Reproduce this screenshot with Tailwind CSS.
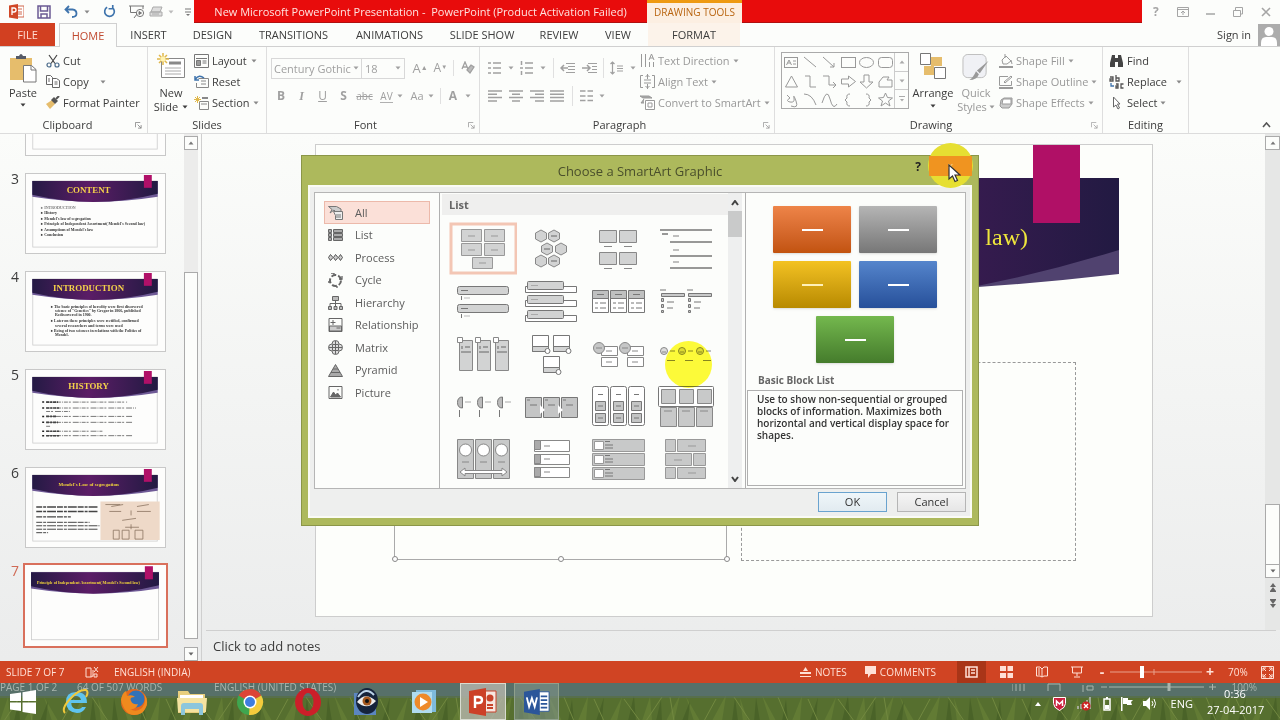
<!DOCTYPE html>
<html lang="en">
<head>
<meta charset="utf-8">
<title>New Microsoft PowerPoint Presentation - PowerPoint</title>
<meta name="viewport" content="width=device-width, initial-scale=1">
<script src="https://cdn.jsdelivr.net/npm/@tailwindcss/browser@4"></script>
</head>
<body class="bg-[#fcfdfb] font-['Open_Sans','Noto_Sans',sans-serif] text-[11px] leading-4 text-[#3c3c3c]">

<!-- shared drawings -->
<svg class="absolute size-0" aria-hidden="true">
  <defs>
    <linearGradient id="banner" x1="0" x2="1"><stop offset="0" stop-color="#241a44"/><stop offset=".45" stop-color="#5b1d66"/><stop offset="1" stop-color="#221a42"/></linearGradient>
    <symbol id="dd" viewBox="0 0 6 4"><path d="M.5.5h5L3 3.5z" fill="currentColor"/></symbol>
    <symbol id="launch" viewBox="0 0 8 8"><path d="M.5 6V.5H6M3 3l4 4M7 3.500V7H3.500" fill="none" stroke="currentColor"/></symbol>
    <symbol id="slidebg" viewBox="0 0 140 80">
      <rect x="6.500" y="7" width="126" height="67" fill="#fdfdfc" stroke="#ccc" stroke-width=".8"/>
      <path d="M6 7h127v16Q70 33 6 23z" fill="#6f5a96"/>
      <path d="M6 7h127v13Q70 36 6 21z" fill="url(#banner)"/>
      <rect x="119" y="1" width="8" height="13" fill="#b01068"/>
    </symbol>
  </defs>
</svg>

<div class="relative flex h-screen min-h-[640px] w-full flex-col overflow-hidden">

<!-- title bar -->
<header class="flex h-[23px] shrink-0 items-stretch">
  <div class="flex w-[194px] shrink-0 items-center">
    <svg class="ml-[9px] size-[15px]" viewBox="0 0 15 15"><rect x="6" y="2" width="9" height="11" fill="#fff" stroke="#d0694e"/><path d="M9 5h4M9 8h4M9 10h4" stroke="#d0694e"/><path d="M0 1.500 9 0v15L0 13.500z" fill="#d04727"/><path d="M3 11V4h2q2 0 2 2T5 8H3" fill="none" stroke="#fff" stroke-width="1.300"/></svg>
    <button class="ml-[13px]" aria-label="Save"><svg class="size-[14px]" viewBox="0 0 14 14" fill="none" stroke="#6a5a94" stroke-width="1.500"><path d="M1 1h12v12H1zM3.500 1v5h7V1M4 13V9h6v4"/></svg></button>
    <button class="ml-[13px] flex items-center gap-[6px] text-[#888]" aria-label="Undo"><svg class="h-[13px] w-[14px]" viewBox="0 0 14 13" fill="none" stroke="#3f74ad" stroke-width="1.800"><path d="M5 1 1.500 4.500 5 8M2 4.500h6.500q4 .5 4 4T8 12"/></svg><svg class="h-1 w-[6px]"><use href="#dd"/></svg></button>
    <button class="ml-[13px]" aria-label="Repeat"><svg class="size-[13px]" viewBox="0 0 14 14" fill="none" stroke="#3f74ad" stroke-width="1.800"><path d="M4.500 2.500A5.200 5.200 0 1 0 10 2.800M10.500 0v4H6"/></svg></button>
    <button class="ml-[13px]" aria-label="Start slide show"><svg class="h-[14px] w-4" viewBox="0 0 16 14" fill="none" stroke="#777"><path d="M0 1h15M1.500 1v6.500H7M14 1v3M5 13l3-4"/><circle cx="11" cy="8" r="3.600"/><path d="M10 6.500 12.500 8 10 9.500z" fill="#777"/></svg></button>
    <button class="ml-[4px] flex items-center gap-1 text-[#bbb]" aria-label="Touch mode"><svg class="h-3 w-[15px]" viewBox="0 0 15 12" fill="#ddd" stroke="#aaa"><path d="M4 1h9l-2 5H2zM1 6h12v4H1zM3 8h7"/></svg><svg class="h-1 w-[6px]"><use href="#dd"/></svg></button>
    <button class="ml-[11px]" aria-label="Customize toolbar"><svg class="h-2 w-[6px]" viewBox="0 0 6 8" stroke="#777"><path d="M0 1h6M0 4h6"/><path d="M1 6h4L3 8z" fill="#777" stroke="none"/></svg></button>
  </div>
  <h1 class="w-[453px] shrink-0 border-b border-[#b01010] bg-[#e80c0c] pt-1 text-center text-[11px] whitespace-pre text-[#ffe4e0]">New Microsoft PowerPoint Presentation -  PowerPoint (Product Activation Failed)</h1>
  <div class="w-[95px] shrink-0 border-t-[3px] border-[#ee9a12] bg-[#fcefe2] pt-[1px] text-center text-[10px] font-medium whitespace-nowrap text-[#b8640f]">DRAWING TOOLS</div>
  <div class="flex-1 border-b border-[#b01010] bg-[#e80c0c]"></div>
  <div class="flex w-[138px] shrink-0 items-center justify-between pr-[9px] pl-[11px] text-[#a5a5a5]">
    <button class="text-[12px] font-bold" aria-label="Help">?</button>
    <button aria-label="Ribbon display options"><svg class="h-[10px] w-3" viewBox="0 0 12 10" fill="none" stroke="currentColor"><path d="M.5.5h11v9H.5zM.5 2.500h11M6 8V4.500M4 6l2-2 2 2"/></svg></button>
    <button aria-label="Minimize"><svg class="h-[10px] w-[9px]" viewBox="0 0 9 10" stroke="currentColor" stroke-width="1.500"><path d="M0 7h9"/></svg></button>
    <button aria-label="Restore"><svg class="size-[10px]" viewBox="0 0 10 10" fill="none" stroke="currentColor"><path d="M.5 3.500h7v6h-7zM2.500 3V.5h7V7H8"/></svg></button>
    <button aria-label="Close"><svg class="size-[10px]" viewBox="0 0 10 10" stroke="currentColor" stroke-width="1.600"><path d="m1 1 8 8M9 1 1 9"/></svg></button>
  </div>
</header>

<!-- ribbon tabs -->
<nav class="flex h-6 shrink-0 items-stretch border-b border-[#d0d0d0] text-center whitespace-nowrap">
  <button class="w-[55px] shrink-0 bg-[#d24021] text-[#ffdcd0]">FILE</button>
  <button class="-mb-px ml-1 w-[58px] shrink-0 border border-b-0 border-[#d0d0d0] bg-[#fcfdfb] text-[#c04a30]">HOME</button>
  <button class="w-[63px] shrink-0">INSERT</button>
  <button class="w-[65px] shrink-0">DESIGN</button>
  <button class="w-[97px] shrink-0">TRANSITIONS</button>
  <button class="w-[95px] shrink-0">ANIMATIONS</button>
  <button class="w-[90px] shrink-0">SLIDE SHOW</button>
  <button class="w-[64px] shrink-0">REVIEW</button>
  <button class="w-[54px] shrink-0">VIEW</button>
  <button class="ml-[3px] w-[92px] shrink-0 bg-[#fcf3ea]">FORMAT</button>
  <div class="flex flex-1 items-center justify-end gap-[7px]">
    <a href="#" class="text-[11px]">Sign in</a>
    <svg class="h-[22px] w-[22px] bg-[#acacac]" viewBox="0 0 22 22" fill="#fff"><circle cx="11" cy="7.500" r="4.500"/><path d="M3 22v-3q0-6 5-6h6q5 0 5 6v3z"/></svg>
  </div>
</nav>

<!-- ribbon -->
<div class="flex h-[87px] shrink-0 border-b border-[#dcdcdc] whitespace-nowrap">

  <section class="flex w-[148px] shrink-0 flex-col border-r border-[#dedede]">
    <div class="flex h-[68px] shrink-0 pt-[3px]">
      <button class="flex w-[46px] flex-col items-center">
        <svg class="mt-[3px] h-[30px] w-[28px]" viewBox="0 0 28 30"><path d="M1 5h22v22H1z" fill="#e6bd6c"/><path d="M7 6V3h3q2-4 4 0h3v3z" fill="#555a66"/><path d="M14.500 12.500h8l4.500 4V29H14.500z" fill="#fff" stroke="#777"/><path d="M22 12.500V17h5" fill="none" stroke="#777"/></svg>
        <span class="mt-[2px]">Paste</span><svg class="mt-[2px] h-1 w-[6px]"><use href="#dd"/></svg>
      </button>
      <div class="flex flex-col items-start">
        <button class="flex h-[21px] items-center gap-[3px]"><svg class="h-[14px] w-[14px]" viewBox="0 0 14 14" fill="none" stroke="#4a6a8a" stroke-width="1.200"><path d="M3 1l6 8.500M11 1 5 9.500" stroke="#444"/><circle cx="3" cy="11" r="2"/><circle cx="11" cy="11" r="2"/></svg>Cut</button>
        <button class="flex h-[21px] items-center gap-[3px]"><svg class="h-[13px] w-[14px]" viewBox="0 0 14 13" fill="#fff" stroke="#666"><path d="M.5.5h4l2 2v7h-6zM6.500 3.500h4l3 2v7h-7z"/><path d="M2 4h2M2 6h2M8.500 7h3M8.500 9h3"/></svg>Copy<svg class="ml-[8px] h-1 w-[6px] text-[#888]"><use href="#dd"/></svg></button>
        <button class="flex h-[21px] items-center gap-[3px]"><svg class="h-[13px] w-[14px]" viewBox="0 0 14 13"><path d="M0 8l6-4 3 4-5 5z" fill="#e6bd6c"/><path d="M5 4l3-3 4 4-3 3z" fill="#555"/><path d="m10 3 3-3" stroke="#555" stroke-width="2"/></svg>Format Painter</button>
      </div>
    </div>
    <div class="flex h-5 shrink-0 items-center pr-[5px]"><span class="flex-1 text-center">Clipboard</span><svg class="size-[7px] text-[#888]"><use href="#launch"/></svg></div>
  </section>

  <section class="flex w-[119px] shrink-0 flex-col border-r border-[#dedede]">
    <div class="flex h-[68px] shrink-0 pt-[3px]">
      <button class="flex w-[46px] flex-col items-center">
        <svg class="mt-[3px] h-[27px] w-[29px]" viewBox="0 0 29 27"><path d="M4.500 5.500h23v19h-23z" fill="#fff" stroke="#888"/><path d="M12 10h12" stroke="#888" stroke-width="3"/><path d="M8 15h16M8 18h16M8 21h16" stroke="#aaa"/><path d="M6 0v12M0 6h12M2 2l8 8M10 2l-8 8" stroke="#e0b84a" stroke-width="1.500"/><circle cx="6" cy="6" r="2.500" fill="#fff3b0"/></svg>
        <span class="mt-[5px]">New</span><span class="-mt-[2px] flex items-center gap-1">Slide <svg class="h-1 w-[6px]"><use href="#dd"/></svg></span>
      </button>
      <div class="flex flex-col items-start">
        <button class="flex h-[21px] items-center gap-[3px]"><svg class="h-[14px] w-[15px]" viewBox="0 0 15 14" fill="none" stroke="#777"><path d="M.5.5h14v13H.5zM2 4.500h11"/><path d="M2.500 6.500h4v5h-4z" fill="#999"/><path d="M8.500 7h4M8.500 9h4"/></svg>Layout<svg class="ml-[1px] h-1 w-[6px] text-[#888]"><use href="#dd"/></svg></button>
        <button class="flex h-[21px] items-center gap-[3px]"><svg class="h-[13px] w-[15px]" viewBox="0 0 15 13" fill="none" stroke="#888"><path d="M4.500 3.500h10v9h-12V8"/><path d="M7 9h5M7 6h5"/><path d="M1 1v4h4M1.500 4Q5-1 10 3" stroke="#3f74ad" stroke-width="1.500"/></svg>Reset</button>
        <button class="flex h-[21px] items-center gap-[3px]"><svg class="h-[14px] w-[15px]" viewBox="0 0 15 14" fill="none" stroke="#888"><path d="M5.500 5.500h9v8h-9zM7 8h6"/><path d="M8 2h6" stroke-width="2"/><path d="M3.500 0v7M0 3.500h7M1 1l5 5M6 1 1 6" stroke="#e0b84a"/></svg>Section<svg class="h-1 w-[6px] text-[#888]"><use href="#dd"/></svg></button>
      </div>
    </div>
    <div class="flex h-5 shrink-0 items-center justify-center">Slides</div>
  </section>

  <section class="flex w-[213px] shrink-0 flex-col border-r border-[#dedede] text-[#a0a0a0]">
    <div class="h-[68px] shrink-0 pt-[10px] pl-[4px]">
      <div class="flex h-[22px] items-center">
        <label class="flex h-[21px] w-[92px] items-center border border-[#d8d8d8] px-[2px]"><span class="sr-only">Font</span><input class="h-[18px] w-0 flex-1 bg-transparent text-[11px] outline-none" value="Century Gothic (" disabled><svg class="h-1 w-[6px]"><use href="#dd"/></svg></label>
        <label class="-ml-px flex h-[21px] w-[44px] items-center border border-[#d8d8d8] px-[3px]"><span class="sr-only">Font size</span><input class="h-[18px] w-0 flex-1 bg-transparent text-[11px] outline-none" value="18" disabled><svg class="h-1 w-[6px]"><use href="#dd"/></svg></label>
        <button class="ml-[5px] w-[21px] text-[13px]" aria-label="Increase font size">A<sup class="text-[7px]">▲</sup></button>
        <button class="w-[20px] text-[12px]" aria-label="Decrease font size">A<sup class="text-[6px]">▼</sup></button>
        <span class="mx-[3px] h-4 w-px bg-[#e0e0e0]"></span>
        <button class="w-[22px]" aria-label="Clear formatting"><svg class="mx-auto size-[14px]" viewBox="0 0 14 14" fill="none" stroke="currentColor" stroke-width="1.300"><path d="m1 8 3-7 3 7M2 6h4"/><path d="m6 9 4-5 3 2-4 6z" fill="#bbb"/></svg></button>
      </div>
      <div class="mt-[7px] flex h-5 items-center text-[12px]">
        <button class="w-[20px] font-bold">B</button><button class="w-[21px] font-['Liberation_Serif',serif] font-bold italic">I</button><button class="w-[21px] font-medium underline">U</button><button class="w-[21px] font-bold">S</button><button class="w-[21px] text-[10px] line-through">abc</button>
        <button class="flex w-[33px] items-center justify-center gap-1" aria-label="Character spacing"><span class="border-b border-[#b0b0b0] text-[10px] leading-3">AV</span><svg class="h-1 w-[6px]"><use href="#dd"/></svg></button>
        <button class="flex w-[28px] items-center justify-center gap-1 text-[11px]" aria-label="Change case">Aa<svg class="h-1 w-[6px]"><use href="#dd"/></svg></button>
        <span class="mx-1 h-4 w-px bg-[#e0e0e0]"></span>
        <button class="flex w-[30px] items-center justify-center gap-2" aria-label="Font color"><b>A</b><svg class="h-1 w-[6px]"><use href="#dd"/></svg></button>
      </div>
    </div>
    <div class="flex h-5 shrink-0 items-center pr-1"><span class="flex-1 pr-1 text-center text-[#3c3c3c]">Font</span><svg class="size-[7px]"><use href="#launch"/></svg></div>
  </section>

  <section class="flex w-[295px] shrink-0 flex-col border-r border-[#dedede] text-[#a0a0a0]">
    <div class="flex h-[68px] shrink-0">
      <div class="w-[160px] pt-[10px] pl-[7px]">
        <div class="flex h-[22px] items-center">
          <button class="flex w-[33px] items-center gap-[6px]" aria-label="Bullets"><svg class="ml-[1px] h-[14px] w-[14px]" viewBox="0 0 14 14" stroke="currentColor" stroke-width="1.500"><path d="M0 2h3M5 2h8M0 7h3M5 7h8M0 12h3M5 12h8"/></svg><svg class="h-1 w-[6px]"><use href="#dd"/></svg></button>
          <button class="flex w-[31px] items-center gap-[6px]" aria-label="Numbering"><svg class="h-[14px] w-[14px]" viewBox="0 0 14 14" stroke="currentColor" stroke-width="1.500"><path d="M1.500 0v4M5 2h8M0 7h3M5 7h8M1.500 10v4M5 12h8"/></svg><svg class="h-1 w-[6px]"><use href="#dd"/></svg></button>
          <span class="mx-[2px] h-5 w-px bg-[#e0e0e0]"></span>
          <button class="w-[22px]" aria-label="Decrease indent"><svg class="mx-auto h-3 w-[15px]" viewBox="0 0 15 12" fill="none" stroke="currentColor"><path d="M6 1.500h9M6 10.500h9M8 4.500h7M8 7.500h7"/><path d="M8 6H1m3-3L1 6l3 3" stroke-width="1.500"/></svg></button>
          <button class="w-[22px]" aria-label="Increase indent"><svg class="mx-auto h-3 w-[15px]" viewBox="0 0 15 12" fill="none" stroke="currentColor"><path d="M6 1.500h9M6 10.500h9M10 4.500h5M10 7.500h5"/><path d="M0 6h8M5 3l3 3-3 3" stroke-width="1.500"/></svg></button>
          <span class="mr-[6px] ml-[3px] h-5 w-px bg-[#e0e0e0]"></span>
          <button class="flex items-center gap-[6px]" aria-label="Line spacing"><svg class="h-[14px] w-[14px]" viewBox="0 0 14 14" fill="none" stroke="currentColor" stroke-width="1.200"><path d="M2.500 1v12M.5 3l2-2 2 2M.5 11l2 2 2-2M7 5h6M7 7.500h6M7 10h6"/></svg><svg class="h-1 w-[6px]"><use href="#dd"/></svg></button>
        </div>
        <div class="mt-[7px] flex h-5 items-center">
          <button class="w-[21px]" aria-label="Align left"><svg class="ml-[1px] h-3 w-[14px]" viewBox="0 0 14 12" stroke="currentColor" stroke-width="1.500"><path d="M0 1h14M0 4.300h9M0 7.600h14M0 11h9"/></svg></button>
          <button class="w-[21px]" aria-label="Center"><svg class="ml-[1px] h-3 w-[14px]" viewBox="0 0 14 12" stroke="currentColor" stroke-width="1.500"><path d="M0 1h14M3 4.300h8M0 7.600h14M3 11h8"/></svg></button>
          <button class="w-[20px]" aria-label="Align right"><svg class="ml-[1px] h-3 w-[14px]" viewBox="0 0 14 12" stroke="currentColor" stroke-width="1.500"><path d="M0 1h14M5 4.300h9M0 7.600h14M5 11h9"/></svg></button>
          <button class="w-[21px]" aria-label="Justify"><svg class="ml-[1px] h-3 w-[14px]" viewBox="0 0 14 12" stroke="currentColor" stroke-width="1.500"><path d="M0 1h14M0 4.300h14M0 7.600h14M0 11h14"/></svg></button>
          <span class="mr-[7px] ml-[2px] h-5 w-px bg-[#e0e0e0]"></span>
          <button class="flex items-center gap-[6px]" aria-label="Columns"><svg class="h-3 w-[13px]" viewBox="0 0 13 12" stroke="currentColor" stroke-width="1.500"><path d="M0 1h5.500M7.500 1H13M0 6h5.500M7.500 6H13M0 10.500h5.500M7.500 10.500H13"/></svg><svg class="h-1 w-[6px]"><use href="#dd"/></svg></button>
        </div>
      </div>
      <div class="flex flex-col items-start pt-[3px] text-[#999]">
        <button class="flex h-[21px] items-center gap-[3px]"><svg class="size-[15px]" viewBox="0 0 15 15" fill="none" stroke="currentColor"><path d="M1.500 1v13M5.500 1v13M9 7l2.500-6L14 7M10 5h3M9.500 9v5M13.500 9v5"/></svg>Text Direction<svg class="h-1 w-[6px]"><use href="#dd"/></svg></button>
        <button class="flex h-[21px] items-center gap-[3px]"><svg class="size-[15px]" viewBox="0 0 15 15" fill="none" stroke="currentColor"><path d="M3 1.500H.5v12H3M12 1.500h2.500v12H12M4 6h7M4 9h7M7.500 0v5M5.500 3l2-2 2 2M7.500 15v-5M5.500 12l2 2 2-2"/></svg>Align Text<svg class="h-1 w-[6px]"><use href="#dd"/></svg></button>
        <button class="flex h-[21px] items-center gap-[3px]"><svg class="size-[15px]" viewBox="0 0 15 15" fill="none" stroke="currentColor"><path d="M0 1h9l3 2H3zM4 4 1 8h3" fill="#aaa"/><path d="M5.500 5.500h9v9h-9z" fill="#fff"/><path d="M8 8h4v4H8z"/></svg>Convert to SmartArt<svg class="h-1 w-[6px]"><use href="#dd"/></svg></button>
      </div>
    </div>
    <div class="flex h-5 shrink-0 items-center pr-1"><span class="flex-1 pr-1 text-center text-[#3c3c3c]">Paragraph</span><svg class="size-[7px]"><use href="#launch"/></svg></div>
  </section>

  <section class="flex w-[328px] shrink-0 flex-col border-r border-[#dedede]">
    <div class="flex h-[68px] shrink-0 pl-[6px]">
      <div class="mt-[5px] flex h-[57px] w-[128px] border border-[#aaa]" role="listbox" aria-label="Shapes">
        <svg class="h-[55px] w-[112px]" viewBox="0 0 112 55" fill="none" stroke="#999">
          <rect x="2.500" y="4.500" width="13" height="10"/><path d="M4.500 12l2.500-5 2.500 5M5.500 10h3M11 8h3M11 11h3"/>
          <path d="m22 4 12 10M41 4l11 10m0-4v4h-4"/><rect x="59.500" y="4.500" width="14" height="10"/><ellipse cx="84.500" cy="9.500" rx="7" ry="5"/><rect x="96.500" y="4.500" width="14" height="10" rx="3"/>
          <path d="m3.500 34 6-11 6 11zM23 23h5v11h6M41 23h6v9h7m-3-3 3 3-3 3M59.500 26h7v-3l7 5.500-7 5.500v-3h-7zM82 22v7h-4l6.500 6 6.500-6h-4v-7zM97 34v-5l4-5h6l-2 3h5v7z"/>
          <path d="M5 42l3 3q-5 3 0 4t4-4 2 3-5 5M22 41q8 0 12 11M40 50q5-16 8-4t7 5M68 41q-4 0-3 4l-2 2 2 2q-1 4 3 4M84 41q4 0 3 4l2 2-2 2q1 4-3 4"/>
          <path d="m103.500 40 2 4.500 5 .5-4 3 1.500 5-4.500-3-4.500 3 1.500-5-4-3 5-.5z"/>
        </svg>
        <div class="flex flex-1 flex-col divide-y divide-[#ccc] border-l border-[#ccc] text-[#aaa]">
          <button class="flex flex-1 items-center justify-center" aria-label="Previous row"><svg class="h-1 w-[6px] rotate-180"><use href="#dd"/></svg></button>
          <button class="flex flex-1 items-center justify-center" aria-label="Next row"><svg class="h-1 w-[6px]"><use href="#dd"/></svg></button>
          <button class="flex flex-1 items-center justify-center" aria-label="More shapes"><svg class="h-[6px] w-[6px]" viewBox="0 0 6 6"><path d="M0 .5h6" stroke="currentColor"/><path d="M1 3h4L3 5.500z" fill="currentColor"/></svg></button>
        </div>
      </div>
      <button class="flex w-[48px] flex-col items-center pt-[6px]">
        <svg class="h-[26px] w-[26px]" viewBox="0 0 26 26"><path d="M11 4h11v9H11zM4 13h10v9H4z" fill="#e6bd6c"/><path d="M.5.500h10v11H.5zM14.500 14.500h11v11h-11z" fill="#fff" stroke="#777"/></svg>
        <span class="mt-[6px]">Arrange</span><svg class="mt-[3px] h-1 w-[6px]"><use href="#dd"/></svg>
      </button>
      <button class="flex w-[38px] flex-col items-center pt-[7px] text-[#999]">
        <svg class="h-[28px] w-[28px]" viewBox="0 0 28 28"><rect x=".5" y=".5" width="24" height="24" rx="5" fill="#f0f1f5" stroke="#bbb"/><path d="m27 7-9 13-3-3zM14 18l3 3q-2 6-10 6 4-2 7-9z" fill="#999"/></svg>
        <span class="mt-[4px]">Quick</span><span class="-mt-[2px] flex items-center gap-[2px]">Styles<svg class="h-1 w-[6px]"><use href="#dd"/></svg></span>
      </button>
      <div class="flex flex-col items-start pt-[3px] pl-[4px] text-[#999]">
        <button class="flex h-[21px] items-center gap-[3px]"><svg class="size-[14px]" viewBox="0 0 14 14" fill="none" stroke="currentColor"><path d="m3 6 4-4 5 5-4 3H4zM6 0v4M12 6l1 4"/><path d="M0 13h14" stroke-width="2"/></svg>Shape Fill<svg class="h-1 w-[6px]"><use href="#dd"/></svg></button>
        <button class="flex h-[21px] items-center gap-[3px]"><svg class="size-[14px]" viewBox="0 0 14 14" fill="none" stroke="currentColor"><path d="M9 1.500H.5v9h12V6M5 7l7-6 1 1-7 6z"/><path d="M0 13h14" stroke-width="2"/></svg>Shape Outline<svg class="h-1 w-[6px]"><use href="#dd"/></svg></button>
        <button class="flex h-[21px] items-center gap-[3px]"><svg class="size-[14px]" viewBox="0 0 14 14" stroke="currentColor"><path d="M3 12l-2-2 1-6 3-2h8v6l-3 4z" fill="#ccc"/><path d="M4 3h8v5H3z" fill="#fff"/></svg>Shape Effects<svg class="h-1 w-[6px]"><use href="#dd"/></svg></button>
      </div>
    </div>
    <div class="flex h-5 shrink-0 items-center pr-1"><span class="flex-1 pr-[4px] text-center">Drawing</span><svg class="size-[7px] text-[#aaa]"><use href="#launch"/></svg></div>
  </section>

  <section class="flex w-[86px] shrink-0 flex-col border-r border-[#dedede]">
    <div class="flex h-[68px] shrink-0 flex-col items-start pt-[3px] pl-[6px]">
      <button class="flex h-[21px] items-center gap-[3px]"><svg class="h-3 w-[15px]" viewBox="0 0 15 12" fill="#444"><path d="M3 0h3v3h3V0h3l2 8v4H9V7H6v5H1V8z"/></svg>Find</button>
      <button class="flex h-[21px] items-center gap-[3px]"><svg class="h-[14px] w-[15px]" viewBox="0 0 15 14" fill="none" stroke="#555" stroke-width="1.300"><path d="M1 2h3v4H1V4h3M7 0v6h3V3H7"/><path d="M2 8v3h3" stroke="#3f74ad"/><path d="M7 9h2v4H7v-2h2M14.500 9H12v4h2.500"/></svg>Replace<svg class="ml-[6px] h-1 w-[6px] text-[#888]"><use href="#dd"/></svg></button>
      <button class="flex h-[21px] items-center gap-[3px]"><svg class="h-[14px] w-[15px]" viewBox="0 0 15 14" fill="#fff" stroke="#666"><path d="M4.500 1v10L7 9l2 4 1.500-1L8.500 8H11z"/></svg>Select<svg class="h-1 w-[6px] text-[#888]"><use href="#dd"/></svg></button>
    </div>
    <div class="flex h-5 shrink-0 items-center justify-center">Editing</div>
  </section>
  <div class="flex flex-1 items-end justify-end pr-[9px] pb-[5px]"><button aria-label="Collapse the ribbon"><svg class="h-[6px] w-[9px]" viewBox="0 0 9 6" fill="none" stroke="#555" stroke-width="1.600"><path d="m1 5 3.500-4L8 5"/></svg></button></div>
</div>

<!-- workspace -->
<div class="flex min-h-0 flex-1 bg-linear-to-b from-[#fbfcfa] to-[#ebecec]">

  <!-- slide thumbnails -->
  <aside class="flex w-[184px] shrink-0 flex-col justify-end gap-[17px] overflow-hidden pb-[15px] text-[14px] leading-3" aria-label="Slides">
    <div class="flex shrink-0 pl-[25px]"><svg class="h-[81px] w-[141px] border border-[#c8c8c8] bg-[#fdfdfc]" viewBox="0 0 140 80"><use href="#slidebg"/></svg></div>
    <div class="flex shrink-0"><span class="w-[25px] pl-[11px]">3</span>
      <svg class="h-[81px] w-[141px] border border-[#c8c8c8] bg-[#fdfdfc]" viewBox="0 0 140 80" font-family="Liberation Serif, serif"><use href="#slidebg"/><text x="63" y="19" font-size="9" font-weight="bold" fill="#f5d24a" text-anchor="middle">CONTENT</text>
      <g font-size="4" font-weight="bold" fill="#333"><text x="15" y="35" fill="#777">▸ INTRODUCTION</text><text x="15" y="41">▸ History</text><text x="15" y="47">▸ Mendel's law of segregation</text><text x="15" y="52">▸ Principle of Independent Assortment( Mendel's Second law)</text><text x="15" y="58">▸ Assumptions of Mendel's law</text><text x="15" y="63">▸ Conclusion</text></g></svg></div>
    <div class="flex shrink-0"><span class="w-[25px] pl-[11px]">4</span>
      <svg class="h-[81px] w-[141px] border border-[#c8c8c8] bg-[#fdfdfc]" viewBox="0 0 140 80" font-family="Liberation Serif, serif"><use href="#slidebg"/><text x="63" y="19" font-size="9" font-weight="bold" fill="#f5d24a" text-anchor="middle">INTRODUCTION</text>
      <g font-size="4" font-weight="bold" fill="#333"><text x="25" y="36">▸ The basic principles of heredity were first discovered</text><text x="29" y="40">science of "Genetics" by Gregor in 1866, published</text><text x="29" y="45">Rediscovered in 1900.</text><text x="25" y="51">▸ Later on these principles were rectified, confirmed</text><text x="29" y="56">several researchers and terms were used</text><text x="25" y="61">▸ Being of two sciences in relations with the Politics of</text><text x="29" y="65">Mendel.</text></g></svg></div>
    <div class="flex shrink-0"><span class="w-[25px] pl-[11px]">5</span>
      <svg class="h-[81px] w-[141px] border border-[#c8c8c8] bg-[#fdfdfc]" viewBox="0 0 140 80" font-family="Liberation Serif, serif"><use href="#slidebg"/><text x="63" y="19" font-size="9" font-weight="bold" fill="#f5d24a" text-anchor="middle">HISTORY</text>
      <g stroke="#777" stroke-width="1"><path d="M16 32.500h2M16 38.500h2M16 47h2M16 53h2M16 62h2M16 66.500h2" stroke="#222" stroke-width="1.500"/><path d="M20 32.500h82M20 38.500h91M20 42h24M20 47h88M20 53h87M20 57h5M20 62h57M20 66.500h87" stroke-dasharray="4 1 2 2 6 1 1 1"/><path d="M20 32.500h12M20 38.500h14M20 47h11M20 53h12M20 62h14M20 66.500h13" stroke="#444" stroke-width="1.600" stroke-dasharray="3 1 2 1"/></g></svg></div>
    <div class="flex shrink-0"><span class="w-[25px] pl-[11px]">6</span>
      <svg class="h-[81px] w-[141px] border border-[#c8c8c8] bg-[#fdfdfc]" viewBox="0 0 140 80" font-family="Liberation Serif, serif"><use href="#slidebg"/><text x="63" y="18" font-size="5" font-weight="bold" fill="#f5d83a" text-anchor="middle">Mendel's Law of segregation</text>
      <g stroke="#444" stroke-width="1.500" stroke-dasharray="6 1 3 1 9 1"><path d="M10 39.500h62M10 44h62M10 49.500h35"/><path d="M10 55h54M10 58.500h64M10 62h62M10 65.500h12" stroke-width="1"/></g>
      <path d="M75 34h60v39H75z" fill="#eed9c8"/><g fill="none" stroke="#8a7460"><path d="M80 37h15M86 39l12-2M112 39l12-2M97 53l14-2M106 43v5M106 57v5M84 44h12M112 44h14M100 60h14" stroke-width=".8"/><path d="M88 63h6v9h-6zM97 63h7v9h-7zM110 63h8v9h-8z" stroke-width=".8"/></g></svg></div>
    <div class="flex shrink-0 text-[#d06a55]" aria-current="true"><span class="w-[25px] pl-[11px]">7</span>
      <svg class="h-[81px] w-[141px] bg-[#fdfdfc] outline-2 outline-[#d9705c]" viewBox="0 0 140 80" font-family="Liberation Serif, serif"><use href="#slidebg"/><text x="63" y="19" font-size="4" font-weight="bold" fill="#f5d83a" text-anchor="middle">Principle of Independent Assortment( Mendel's Second law)</text></svg></div>
  </aside>
  <div class="flex w-[18px] shrink-0 flex-col border-r border-[#cfcfcf]">
    <div class="flex w-[14px] flex-1 flex-col bg-[#ececeb] pt-[2px]">
      <button class="flex h-[14px] items-center justify-center border border-[#aaa] bg-[#fcfdfb] text-[#777]" aria-label="Scroll up"><svg class="h-1 w-[6px] rotate-180"><use href="#dd"/></svg></button>
      <div class="mt-[122px] flex-1 border border-[#aaa] bg-[#fcfdfb]"></div>
      <button class="mt-2 flex h-[14px] items-center justify-center border border-[#aaa] bg-[#fcfdfb] text-[#666]" aria-label="Scroll down"><svg class="h-1 w-[6px]"><use href="#dd"/></svg></button>
    </div>
  </div>

  <!-- editor -->
  <main class="flex min-w-0 flex-1 flex-col">
    <div class="flex min-h-0 flex-1">
      <div class="flex min-w-0 flex-1 pt-[10px] pr-[112px] pb-[13px] pl-[113px]">
        <!-- slide canvas: shapes are freely placed -->
        <div class="relative flex-1 overflow-hidden border border-[#cdcdcd] bg-[#fdfefb]">
          <svg class="absolute top-[33px] right-[33px] h-[130px] w-[768px]" viewBox="0 0 768 130" preserveAspectRatio="none"><path d="M0 0h768v96Q384 140 0 96z" fill="#50426f"/><path d="M0 0h768v72Q384 190 0 90z" fill="url(#banner)"/></svg>
          <p class="absolute top-[76px] right-[124px] font-['Liberation_Serif',serif] text-[24px] leading-8 text-[#efe63c]">law)</p>
          <div class="absolute top-0 right-[72px] h-[78px] w-[47px] bg-[#b01066]"></div>
          <div class="absolute top-[218px] left-[78px] h-[197px] w-[333px] border border-[#aaa]"></div>
          <div class="absolute top-[217px] right-[76px] h-[199px] w-[335px] border border-dashed border-[#999]"></div>
          <span class="absolute top-[411px] left-[76px] size-[6px] rounded-full border border-[#888] bg-white"></span>
          <span class="absolute top-[411px] left-[242px] size-[6px] rounded-full border border-[#888] bg-white"></span>
          <span class="absolute top-[411px] left-[408px] size-[6px] rounded-full border border-[#888] bg-white"></span>
        </div>
      </div>
      <div class="flex w-[15px] shrink-0 flex-col bg-[#e6e7e6] pt-[2px] pb-[22px]">
        <button class="flex h-[14px] items-center justify-center border border-[#aaa] bg-[#fcfdfb] text-[#777]" aria-label="Scroll up"><svg class="h-1 w-[6px] rotate-180"><use href="#dd"/></svg></button>
        <div class="flex-1"></div>
        <div class="h-[61px] border border-[#aaa] bg-[#fcfdfb]"></div>
        <button class="-mt-px flex h-[14px] items-center justify-center border border-[#aaa] bg-[#fcfdfb] text-[#666]" aria-label="Scroll down"><svg class="h-1 w-[6px]"><use href="#dd"/></svg></button>
        <button class="mt-[5px] flex justify-center" aria-label="Previous slide"><svg class="h-[9px] w-[6px]" viewBox="0 0 6 9" fill="#666"><path d="M0 4h6L3 0zM0 8h6L3 4zM0 8h6v1H0z"/></svg></button>
        <button class="mt-[7px] flex justify-center" aria-label="Next slide"><svg class="h-[9px] w-[6px]" viewBox="0 0 6 9" fill="#666"><path d="M0 5h6L3 9zM0 1h6L3 5zM0 0h6v1H0z"/></svg></button>
      </div>
    </div>
    <div class="mx-1 h-[31px] shrink-0 border-t border-[#cfcfcf] pt-[5px] pl-[7px] text-[13px] leading-5">Click to add notes</div>
  </main>
</div>

<!-- status bar -->
<footer class="flex h-[22px] shrink-0 items-center bg-[#d04423] pl-[6px] text-[10px] whitespace-nowrap text-[#ffe0d6]">
  <span class="w-[79px]">SLIDE 7 OF 7</span>
  <svg class="mr-[15px] h-3 w-[14px]" viewBox="0 0 14 12" fill="none" stroke="currentColor"><path d="M6 11V2H1v9h5q2 0 2-2V4M9 1l4 5M13 1 9 6M9 8h3v3H9z"/></svg>
  <span class="flex-1">ENGLISH (INDIA)</span>
  <button class="mr-[18px] flex items-center gap-[4px]"><svg class="h-3 w-[11px]" viewBox="0 0 11 12" fill="currentColor"><path d="M3 5l2.500-4L8 5zM0 6h11v2H0zM0 10h11v1H0z"/></svg>NOTES</button>
  <button class="mr-[21px] flex items-center gap-1"><svg class="h-3 w-[11px]" viewBox="0 0 11 12" fill="currentColor"><path d="M0 0h11v8H6l-3 4V8H0z"/></svg>COMMENTS</button>
  <button class="mr-[3px] flex h-full w-[29px] items-center justify-center bg-[#a93518]" aria-label="Normal view"><svg class="h-3 w-[13px]" viewBox="0 0 13 12" fill="none" stroke="currentColor" stroke-width="1.500"><path d="M1 1h11v10H1zM4 1v10M6 4h4M6 7h4"/></svg></button>
  <button class="w-[35px]" aria-label="Slide sorter"><svg class="mx-auto h-3 w-[13px]" viewBox="0 0 13 12" fill="currentColor"><path d="M0 0h6v5H0zM7.500 0h5.500v5H7.500zM0 7h6v5H0zM7.500 7h5.500v5H7.500z"/></svg></button>
  <button class="w-[35px]" aria-label="Reading view"><svg class="mx-auto h-3 w-[12px]" viewBox="0 0 12 12" fill="none" stroke="currentColor"><path d="M.5 1H4l2 2 2-2h3.500v9H8l-2 1-2-1H.5zM6 2v9M3 2v7"/></svg></button>
  <button class="w-[35px]" aria-label="Slide show"><svg class="mx-auto h-3 w-[12px]" viewBox="0 0 12 12" fill="none" stroke="currentColor"><path d="M0 1h12M1.500 1v6h9V1M6 7v3M3 11h6"/></svg></button>
  <button class="ml-[2px] w-3 text-[14px] leading-4 font-bold" aria-label="Zoom out">-</button>
  <svg class="h-3 w-[96px]" viewBox="0 0 96 12" role="img" aria-label="Zoom slider"><path d="M2 6h92M46 3v6" stroke="#e8a08c"/><path d="M32 0h4v12h-4z" fill="#fff"/></svg>
  <button class="w-3 text-[14px] leading-4 font-bold" aria-label="Zoom in">+</button>
  <button class="ml-[12px] w-[33px] text-left">70%</button>
  <button class="mr-[6px]" aria-label="Fit slide"><svg class="size-[13px]" viewBox="0 0 13 13" fill="none" stroke="currentColor"><path d="M.5.500h12v12H.5zM2 5V2h3M8 2h3v3M11 8v3H8M5 11H2V8M2 2l3 3M11 2 8 5M11 11 8 8M2 11l3-3"/></svg></button>
</footer>

<!-- taskbar -->
<div class="relative flex h-[37px] shrink-0 items-stretch overflow-hidden bg-[#56702e]">
  <svg class="absolute inset-0 h-full w-full" aria-hidden="true">
    <defs>
      <pattern id="grass" width="214" height="38" patternUnits="userSpaceOnUse">
        <rect width="214" height="38" fill="#566f2f"/>
        <path d="M0 38 8 14l2 24zM24 38l14-26-6 26zM52 38 44 14l14 24zM70 38 84 12 80 38zM101 38 98 15l8 23zM128 38l-8-26 14 26zM150 38l10-25-2 25zM182 38l12-24-5 24z" fill="#627b34"/>
        <path d="M14 38l5-22 1 22zM40 38l8-20-2 20zM90 38l3-24 3 24zM112 38l2-24 4 24zM140 38l4-22 2 22zM168 38l8-24-2 24zM200 38l6-26 2 26z" fill="#4a6328"/>
        <path d="M4 38 20 14M32 38 28 14M62 38 74 16M108 38 92 14M146 38 136 14M176 38 166 16M212 38 196 16" stroke="#71883f" fill="none"/>
      </pattern>
    </defs>
    <rect width="100%" height="100%" fill="url(#grass)"/>
    <rect width="100%" height="13" fill="#577069"/><rect y="13" width="100%" height="2" fill="#577069" opacity=".5"/>
  </svg>
  <!-- reflected status line of the window behind -->
  <div class="absolute inset-x-0 -top-px flex text-[10px] leading-[10px] whitespace-nowrap text-[#a9b5ae]" aria-hidden="true">
    <span class="w-[77px]">PAGE 1 OF 2</span><span class="w-[137px]">64 OF 507 WORDS</span><span class="flex-1">ENGLISH (UNITED STATES)</span>
    <svg class="h-3 w-[216px]" viewBox="0 0 216 12" fill="none" stroke="currentColor"><path d="M0 2v7M4 2v7M8 2v7M12 2v7M36 9V2h12v7M71 3v7M75 4h6v4h-6zM89 5h6M97 5h95M197 5h7M200.500 2v6"/><path d="M157 1v8" stroke-width="3"/></svg><span class="mr-[23px] ml-1">100%</span>
  </div>
  <div class="relative flex flex-1 items-stretch">
    <button class="w-[46px] pl-[10px]" aria-label="Start"><svg class="h-[24px] w-[26px]" viewBox="0 0 26 24" fill="#fff"><path d="M0 4 11 2.500V11H0zM12.500 2.200 26 0v11H12.500zM0 12.500h11V21L0 19.500zM12.500 12.500H26V24l-13.500-2z"/></svg></button>
    <button class="flex w-[59px] items-center justify-center" aria-label="Internet Explorer"><svg class="size-[28px]" viewBox="0 0 28 28" fill="none"><path d="M25 15H9q1 6 6 6 4 0 5-2h4q-3 6-9 6-11-1-11-11T14 4q11 0 11 11zM9 12h10q-1-4-5-4t-5 4z" fill="#5fc4ee"/><path d="M3 25Q-1 21 8 11T24 2q3 2 0 7" stroke="#f0c93a" stroke-width="2"/></svg></button>
    <button class="flex w-[58px] items-center justify-center" aria-label="Firefox"><svg class="size-[28px]" viewBox="0 0 28 28"><circle cx="14" cy="14" r="13" fill="#e4681c"/><circle cx="16" cy="11" r="8.500" fill="#3272b8"/><path d="M1 12Q2 5 6 3l1 5q5-2 8 1-6 0-4 4t7 3q-2 6-8 5 6 4 12-1 5-6 2-14 5 6 2 13-3 8-12 8T1 12z" fill="#f08a1e"/></svg></button>
    <button class="flex w-[57px] items-center justify-center" aria-label="File Explorer"><svg class="h-[27px] w-[30px]" viewBox="0 0 30 27"><path d="M1 3h10l2 3h15v19H1z" fill="#e8cf7e"/><path d="M3 7h23v3H3z" fill="#fff"/><path d="M0 10h30l-1 14H1z" fill="#f5e3a0"/><path d="M4 27v-9q0-3 3-3h16q3 0 3 3v9h-4v-6H8v6z" fill="#8cc6dc"/></svg></button>
    <button class="flex w-[59px] items-center justify-center" aria-label="Chrome"><svg class="size-[28px]" viewBox="0 0 28 28"><circle cx="14" cy="14" r="13" fill="#3fa650"/><path d="M14 14 2.700 7.500a13 13 0 0 1 22.600 0z" fill="#dc4437"/><path d="M14 14 25.300 7.500A13 13 0 0 1 13 27z" fill="#f4cb3c"/><circle cx="14" cy="14" r="6.500" fill="#fff"/><circle cx="14" cy="14" r="5" fill="#3f7de0"/></svg></button>
    <button class="flex w-[58px] items-center justify-center" aria-label="Opera"><svg class="size-[28px]" viewBox="0 0 28 28"><path fill-rule="evenodd" d="M14 0a13 14 0 1 0 .01 0zM14 5a5.500 9 0 1 1-.01 0z" fill="#cc1f29"/></svg></button>
    <button class="flex w-[58px] items-center justify-center" aria-label="Eye viewer"><svg class="size-[28px]" viewBox="0 0 28 28"><path d="M2 5h22v22H2z" fill="#5b86c0"/><ellipse cx="15" cy="13" rx="11" ry="13" fill="#16243c"/><path d="M5 14q8-11 19-1-9 10-19 1z" fill="#eee"/><circle cx="15" cy="13" r="4.500" fill="#a4571e"/><circle cx="15" cy="13" r="2" fill="#111"/><path d="M6 9Q14-2 22 7" stroke="#bcd4ea" fill="none" stroke-width="2"/></svg></button>
    <button class="flex w-[57px] items-center justify-center" aria-label="Media Player"><svg class="size-[24px]" viewBox="0 0 24 24"><path d="M4 0h20v22H4z" fill="#7ebadc"/><path d="M0 2h20v21H0z" fill="#b0dcf0"/><circle cx="11" cy="12" r="8.500" fill="#ee8a2a"/><path d="m8 7 8 5-8 5z" fill="#fff"/></svg></button>
    <button class="ml-2 flex w-[46px] items-center justify-center border border-[#d8dcd0] bg-[#b7b7ac]/80" aria-label="PowerPoint"><svg class="h-[28px] w-[28px]" viewBox="0 0 28 28"><path d="M15 3h12v21H15z" fill="#f6e6e0" stroke="#c8432a"/><path d="M18 17h6M18 20h6" stroke="#c8432a" stroke-width="2"/><circle cx="21" cy="10" r="3.500" fill="#c8432a"/><path d="M0 3 17 0v28L0 25z" fill="#cc4027"/><path d="M6 20V9h3.500q3.500 0 3.500 3t-3.500 3H6" fill="none" stroke="#fff" stroke-width="2.400"/></svg></button>
    <button class="ml-2 flex w-[45px] items-center justify-center border border-[#8fa08c] bg-[#7f9288]/60" aria-label="Word"><svg class="h-[26px] w-[26px]" viewBox="0 0 28 28"><path d="M15 3h12v21H15z" fill="#fff" stroke="#2b569a"/><path d="M18 8h7M18 12h7M18 16h7M18 20h7" stroke="#2b569a" stroke-width="2"/><path d="M0 3 17 0v28L0 25z" fill="#2b569a"/><path d="m3 9 2.500 10L8.500 10l3 9L14 9" fill="none" stroke="#fff" stroke-width="2"/></svg></button>
  </div>
  <div class="relative flex items-center pt-1 whitespace-nowrap text-white">
    <svg class="h-[5px] w-[8px]" viewBox="0 0 8 5"><path d="M1 5h6L4 1z" fill="#fff"/></svg>
    <svg class="ml-[11px] h-[14px] w-[13px]" viewBox="0 0 13 14"><path d="M.5.5h12v6q0 4-6 7-6-3-6-7z" fill="#c8203c" stroke="#fff"/><path d="M3.500 9V4l3 3 3-3v5" fill="none" stroke="#fff" stroke-width="1.500"/></svg>
    <svg class="ml-[11px] h-[14px] w-[14px]" viewBox="0 0 14 14"><path d="M1 12V9M4 12V7M7 12V5M10 12V3M13 12V0" stroke="#bbb" stroke-width="1.500"/><circle cx="9" cy="9" r="4.500" fill="#cc2222"/><path d="m7 7 4 4M11 7l-4 4" stroke="#fff" stroke-width="1.400"/></svg>
    <svg class="ml-[12px] h-[14px] w-[8px]" viewBox="0 0 8 14"><path d="M1 2h6v11H1z" fill="none" stroke="#fff" stroke-width="1.500"/><path d="M3 0h2v2H3zM2 8h4v4H2z" fill="#fff"/></svg>
    <svg class="ml-[10px] h-[14px] w-[12px]" viewBox="0 0 12 14" fill="#fff"><path d="M0 0h1.500v14H0zM2 1h5v2h5l-2 2 1 3H6V7H2z"/></svg>
    <svg class="ml-[10px] h-[13px] w-[13px]" viewBox="0 0 13 13" fill="#fff"><path d="M0 4h3l4-4v13L3 9H0z"/><path d="M9 4q2 2.500 0 5M11 2q3 4.500 0 9" fill="none" stroke="#fff"/></svg>
    <span class="ml-[15px] text-[11px]">ENG</span>
    <div class="-mt-1 ml-[14px] w-[56px] text-center text-[11px] leading-4"><div>0:36</div><div>27-04-2017</div></div><span class="w-[17px]"></span>
  </div>
</div>

<!-- dialog window -->
<div class="absolute top-[155px] left-[301px] flex w-[678px] flex-col border border-[#8b9648] bg-[#adb95c] px-[6px] pb-[7px]" role="dialog" aria-labelledby="dlg-title">
  <div class="relative flex h-[29px] items-center">
    <h2 id="dlg-title" class="flex-1 text-center text-[13px] text-[#4a4f2c]">Choose a SmartArt Graphic</h2>
    <button class="absolute top-[3px] right-[51px] text-[12px] font-bold text-[#222]" aria-label="Help">?</button>
    <button class="absolute top-0 right-0 z-10 h-[20px] w-[43px] bg-[#f09420] text-[10px] text-[#fbd9a8]" aria-label="Close">×</button>
    <div class="absolute -top-[13px] -right-[1px] z-0 size-[45px] rounded-full bg-[#e6df32]"></div>
    <svg class="absolute top-[8px] right-[11px] z-20 h-[19px] w-[13px]" viewBox="0 0 13 19"><path d="M1 1v14l3.500-3 2.500 5.500 2.500-1L7 11h5z" fill="#fff" stroke="#333" stroke-width="1.200"/></svg>
  </div>
  <div class="border-2 border-[#fafbf5] bg-[#eeefee] px-[4px] pt-[5px] pb-[4px]">
    <div class="flex h-[297px] border border-[#b5b5b5] bg-[#fcfdfb]">
      <!-- categories -->
      <div class="w-[125px] shrink-0 border-r border-[#b0b0b0] pt-[8px] pr-[9px] pl-[9px] text-[11px] text-[#5c5c5c]">
        <button class="flex h-[23px] w-full items-center gap-3 border border-[#ecb9aa] bg-[#fbe0d8] pl-[3px]"><svg class="size-[15px]" viewBox="0 0 15 15" fill="#ccc" stroke="#777"><path d="M.5 1.500h8L13 4v4H9L6 5l-4 3 2-3.500z"/><path d="M5.500 6.500h9v8h-7v-4z" fill="#eee"/><path d="M8 10h5M8 12h5"/></svg>All</button>
        <button class="flex h-[22px] w-full items-center gap-3 pl-1"><svg class="h-3 w-[15px]" viewBox="0 0 15 12" fill="#aaa" stroke="#666"><path d="M.5.5h3v3h-3zM.5 4.500h3v3h-3zM.5 8.500h3v3h-3zM5.500.5h9v3h-9zM5.500 4.500h9v3h-9zM5.500 8.500h9v3h-9z"/></svg>List</button>
        <button class="flex h-[23px] w-full items-center gap-3 pl-1"><svg class="h-[7px] w-[15px]" viewBox="0 0 15 7" fill="#ccc" stroke="#555"><path d="M2.500.5 5 3.500l-2.500 3-2-3zM7.500.5l2.500 3-2.500 3-2-3zM12.500.5l2 3-2 3-2-3z"/></svg>Process</button>
        <button class="flex h-[22px] w-full items-center gap-3 pl-1"><svg class="size-[15px]" viewBox="0 0 15 15" fill="none" stroke="#666" stroke-width="2"><circle cx="7.500" cy="7.500" r="5.500" stroke-dasharray="5 2"/><path d="M3 0h3v3M14 3v3h-3M9 13v2M0 9h3" stroke-width="1.300"/></svg>Cycle</button>
        <button class="flex h-[23px] w-full items-center gap-3 pl-1"><svg class="h-[14px] w-[15px]" viewBox="0 0 15 14" fill="#bbb" stroke="#666"><path d="M4.500.5h6v4h-6zM.5 10.500h3v3h-3zM6 10.500h3v3H6zM11.500 10.500h3v3h-3z"/><path d="M7.500 5v5M2 10V7.500h11V10" fill="none"/></svg>Hierarchy</button>
        <button class="flex h-[22px] w-full items-center gap-3 pl-1"><svg class="h-[14px] w-[15px]" viewBox="0 0 14 14" fill="none" stroke="#666"><path d="M.5.5h13v13H.5z"/><path d="M1 8h12v5H1z" fill="#ccc"/><path d="M4.500 2v5M2 4.500h5M8 10h4"/></svg>Relationship</button>
        <button class="flex h-[23px] w-full items-center gap-3 pl-1"><svg class="size-[15px]" viewBox="0 0 15 15" fill="#ddd" stroke="#666"><path d="M4 4q0-3.500 3.500-3.500T11 4q3.500 0 3.500 3.500T11 11q0 3.500-3.500 3.500T4 11Q.5 11 .5 7.500T4 4z"/><path d="M4.500 4.500h6v6h-6zM7.500 1v13M1 7.500h13" fill="none"/></svg>Matrix</button>
        <button class="flex h-[22px] w-full items-center gap-3 pl-1"><svg class="h-[13px] w-[15px]" viewBox="0 0 15 13" fill="#aaa" stroke="#666"><path d="M7.500.5 14.500 12.500H.5zM5 5h5M3 8.500h9"/></svg>Pyramid</button>
        <button class="flex h-[23px] w-full items-center gap-3 pl-1"><svg class="h-[13px] w-[15px]" viewBox="0 0 14 13" fill="none" stroke="#666"><path d="M.5.5h13v12H.5z"/><path d="M2 11l3-5 2 3 2-2 3 4z" fill="#666"/><path d="M9.500 3v1.500"/></svg>Picture</button>
      </div>
      <!-- layouts -->
      <div class="flex min-w-0 flex-1 pl-[2px]">
        <div class="flex-1">
          <h3 class="mt-[1px] h-[21px] bg-[#efefee] pt-[3px] pl-[7px] text-[11px] font-bold text-[#666]">List</h3>
          <div class="mt-[7px] grid grid-cols-[repeat(4,68px)] justify-start pl-[7px] [&>svg]:h-[53px] [&>svg]:w-[68px]">
            <svg viewBox="0 0 68 53" fill="#d2d3d3" stroke="#999"><rect x="2" y="2" width="65" height="49" fill="none" stroke="#f3c6b4" stroke-width="3"/><path d="M12.500 7.500h20v12h-20zM35.500 7.500h20v12h-20zM12.500 21.500h20v12h-20zM35.500 21.500h20v12h-20zM23.500 35.500h20v11h-20z"/><path d="M19 14h7M42 14h7M19 28h7M42 28h7M30 41h7"/></svg>
            <svg viewBox="0 0 68 53" fill="#d2d3d3" stroke="#888"><path id="hx" d="M24 8l5.500 3v6L24 20l-5.500-3v-6z"/><use href="#hx" x="13"/><use href="#hx" x="6" y="13"/><use href="#hx" x="20" y="13"/><use href="#hx" y="25"/><use href="#hx" x="13" y="25"/><path d="M34 14h6M27 27h6M34 39h6" stroke="#666"/></svg>
            <svg viewBox="0 0 68 53" fill="#d2d3d3" stroke="#888"><path d="M14.500 8.500h17v12h-17zM34.500 8.500h17v12h-17zM14.500 30.500h17v12h-17zM34.500 30.500h17v12h-17z"/><path d="M19 24.500h8M39 24.500h8M19 46.500h8M39 46.500h8"/></svg>
            <svg viewBox="0 0 68 53" stroke="#777" stroke-width="1.500"><path d="M7 8h52M17 20h42M17 34h42M17 46h42M9 12h6"/><path d="M20 14h6M20 28h6M20 40h6" stroke="#aaa"/></svg>

            <svg viewBox="0 0 68 53" fill="#d2d3d3" stroke="#777"><rect x="8.500" y="11.500" width="51" height="8" rx="2"/><rect x="8.500" y="29.500" width="51" height="8" rx="2"/><path d="M12 15.500h7M12 33.500h7M12.500 21v4M12.500 39v4"/><path d="M15 23h6M15 41h6" stroke="#bbb"/></svg>
            <svg viewBox="0 0 68 53" fill="#d2d3d3" stroke="#777"><g id="vb"><path d="M8.500 11.500h51v6h-51z" fill="#fff"/><rect x="10.500" y="6.500" width="36" height="8" rx="1"/><path d="M14 10.500h7" stroke="#aaa"/></g><use href="#vb" y="14"/><use href="#vb" y="29"/></svg>
            <svg viewBox="0 0 68 53" fill="#bfc0c0" stroke="#777"><g id="hc"><path d="M7.500 22.500h16v15h-16z" fill="#fff"/><path d="M7.500 15.500h16v8h-16zM12 19.500h7M10 28h3M15 28h6M10 33h3M15 33h6"/></g><use href="#hc" x="18"/><use href="#hc" x="36"/></svg>
            <svg viewBox="0 0 68 53" fill="#c8c9c9" stroke="#777"><g id="hb"><path d="M8.500 18.500h23v3h-23z"/><path d="M8.500 23.500h2v3h-2zM8.500 29.500h2v3h-2zM8.500 35.500h2v2h-2zM14 27h7M14 33h6M7 15h6"/></g><use href="#hb" x="27"/></svg>

            <svg viewBox="0 0 68 53" fill="#d2d3d3" stroke="#888"><g id="pc"><path d="M10.500 12.500h13v30h-13z"/><path d="M8.500 9.500h5v5h-5z" fill="#fff"/><path d="M13 18v3M16 19h5M12 24h10" stroke="#666"/></g><use href="#pc" x="18"/><use href="#pc" x="36"/></svg>
            <svg viewBox="0 0 68 53" fill="#d2d3d3" stroke="#777"><g id="pb"><path d="M15.500 7.500h16v16h-16z" fill="#fff"/><path d="M15.500 18.500h16v5h-16z"/><circle cx="30.500" cy="23" r="2.500" fill="#fff"/></g><use href="#pb" x="21"/><use href="#pb" x="11" y="21"/></svg>
            <svg viewBox="0 0 68 53" fill="#fff" stroke="#888"><g id="cb"><path d="M16.500 18.500h16v9h-16zM16.500 29.500h16v9h-16z"/><circle cx="14" cy="20" r="5.500" fill="#c5c6c6"/><path d="M11 20h6M21 23h6M21 34h6"/></g><use href="#cb" x="26"/></svg>
            <svg viewBox="0 0 68 53" fill="#ddd" stroke="#888"><g id="cl"><circle cx="11" cy="23" r="3.500"/><path d="M9 24h4M17 23h5M14 32.500h8"/></g><use href="#cl" x="18"/><use href="#cl" x="36"/></svg>

            <svg viewBox="0 0 68 53" fill="#bbb" stroke="#777"><g id="hf"><path d="M13.500 16v11q-5 0-5-5.500t5-5.500z"/><path d="M16 21h6" stroke="#aaa"/><path d="M10.500 29v7"/></g><use href="#hf" x="20"/><use href="#hf" x="40"/></svg>
            <svg viewBox="0 0 68 53" fill="#c4c5c5" stroke="#777"><path d="M8.500 16.500h16v20h-16zM26.500 16.500h16v20h-16zM44.500 16.500h16v20h-16z"/><path d="M13 24h7M31 24h7M49 24h7M10 19h3M28 19h3M46 19h3"/><path d="m23 24 5 5-5 4zM41 24l5 5-5 4z" fill="#fff" stroke="none"/></svg>
            <svg viewBox="0 0 68 53" fill="#c4c5c5" stroke="#777"><g id="gl"><rect x="7.500" y="5.500" width="16" height="39" rx="2" fill="#fff"/><path d="M10.500 20.500h10v9h-10zM10.500 32.500h10v9h-10zM13 13.500h5M13 25h5M13 37h5"/></g><use href="#gl" x="18"/><use href="#gl" x="36"/></svg>
            <svg viewBox="0 0 68 53" fill="#c8c9c9" stroke="#888"><rect x="5.500" y="5.500" width="55" height="20" rx="1" fill="#fff" stroke="#777"/><path d="M8.500 8.500h14v14h-14zM26.500 8.500h14v14h-14zM44.500 8.500h14v14h-14zM7.500 26.500h16v19h-16zM25.500 26.500h16v19h-16zM43.500 26.500h16v19h-16zM11 30h8M29 30h8M47 30h8"/></svg>

            <svg viewBox="0 0 68 53" fill="#c8c9c9" stroke="#888"><path d="M8.500 5.500h16v39h-16zM26.500 5.500h16v39h-16zM44.500 5.500h16v39h-16zM13 28h7M31 28h7M49 28h7"/><g fill="#fff"><circle cx="16.500" cy="16" r="6"/><circle cx="34.500" cy="16" r="6"/><circle cx="52.500" cy="16" r="6"/><path d="m11 38 5-4v2.500h37V34l5 4-5 4v-2.500H16V42z"/></g></svg>
            <svg viewBox="0 0 68 53" fill="#fff" stroke="#888"><path d="M17.500 6.500h35v11h-35zM17.500 20.500h35v10h-35zM17.500 33.500h35v10h-35z"/><path d="M17.500 6.500h6v9h-6zM17.500 20.500h6v9h-6zM17.500 33.500h6v9h-6z" fill="#aaa"/><path d="M27 12h6M27 25h6M27 38h6"/></svg>
            <svg viewBox="0 0 68 53" fill="#c8c9c9" stroke="#999"><g id="vp"><path d="M7.500 5.500h52v12h-52z"/><path d="M9.500 7.500h9v8h-9z" fill="#fff"/><path d="M20 7.500h5M20 11h8M20 14h8" stroke="#777"/></g><use href="#vp" y="14"/><use href="#vp" y="28"/></svg>
            <svg viewBox="0 0 68 53" fill="#c8c9c9" stroke="#999"><path d="M12.500 5.500h10v12h-10zM24.500 5.500h28v12h-28zM12.500 19.500h26v12h-26zM40.500 19.500h12v12h-12zM12.500 33.500h10v11h-10zM24.500 33.500h28v11h-28zM35 12h8M21 26h8M35 39h8"/></svg>
          </div>
        </div>
        <div class="flex w-[14px] shrink-0 flex-col bg-[#eeefef] pt-[2px]">
          <button class="flex h-[16px] items-center justify-center" aria-label="Scroll up"><svg class="h-[6px] w-2" viewBox="0 0 8 6" fill="none" stroke="#444" stroke-width="2"><path d="m1 5 3-4 3 4"/></svg></button>
          <div class="h-[26px] bg-[#c9caca]"></div><div class="flex-1"></div>
          <button class="flex h-[18px] items-center justify-center" aria-label="Scroll down"><svg class="h-[6px] w-2" viewBox="0 0 8 6" fill="none" stroke="#444" stroke-width="2"><path d="m1 1 3 4 3-4"/></svg></button>
        </div>
        <div class="w-[3px]"></div>
      </div>
      <!-- preview -->
      <div class="flex w-[220px] shrink-0 flex-col border-l border-[#b0b0b0] pr-[2px] pb-[2px] pl-px">
        <div class="mt-[13px] flex flex-wrap justify-center gap-[8px] px-[20px] text-white">
          <div class="flex h-[47px] w-[78px] items-center justify-center rounded-[1px] bg-linear-to-b from-[#ee8448] to-[#c2530e] shadow-sm"><span class="h-[2px] w-[21px] bg-white"></span></div>
          <div class="flex h-[47px] w-[78px] items-center justify-center rounded-[1px] bg-linear-to-b from-[#b5b5b5] to-[#777] shadow-sm"><span class="h-[2px] w-[21px] bg-white"></span></div>
          <div class="flex h-[47px] w-[78px] items-center justify-center rounded-[1px] bg-linear-to-b from-[#f3c222] to-[#b88a00] shadow-sm"><span class="h-[2px] w-[21px] bg-[#fff0b8]"></span></div>
          <div class="flex h-[47px] w-[78px] items-center justify-center rounded-[1px] bg-linear-to-b from-[#5585cc] to-[#27509a] shadow-sm"><span class="h-[2px] w-[21px] bg-white"></span></div>
          <div class="flex h-[47px] w-[78px] items-center justify-center rounded-[1px] bg-linear-to-b from-[#74b84e] to-[#457c2c] shadow-sm"><span class="h-[2px] w-[21px] bg-white"></span></div>
        </div>
        <h3 class="mt-[9px] pl-[11px] text-[10px] font-bold text-[#666]">Basic Block List</h3>
        <p class="mt-[2px] flex-1 border border-[#b0b0b0] pt-[2px] pl-[9px] text-[10px] leading-3 font-semibold text-[#333]">Use to show non-sequential or grouped blocks of information. Maximizes both horizontal and vertical display space for shapes.</p>
      </div>
    </div>
    <div class="mt-[3px] flex justify-end gap-[10px] text-[11px] text-[#333]">
      <button class="h-[20px] w-[69px] border border-[#6aa3cf] bg-linear-to-b from-[#eff6fa] to-[#e2ebf0]">OK</button>
      <button class="h-[20px] w-[69px] border border-[#b5b5b5] bg-linear-to-b from-[#f5f5f5] to-[#e6e6e6]">Cancel</button>
    </div>
  </div>
  <div class="absolute top-[185px] left-[363px] size-[47px] rounded-full bg-[#fffc3a] mix-blend-multiply"></div>
</div>

</div>
</body>
</html>
